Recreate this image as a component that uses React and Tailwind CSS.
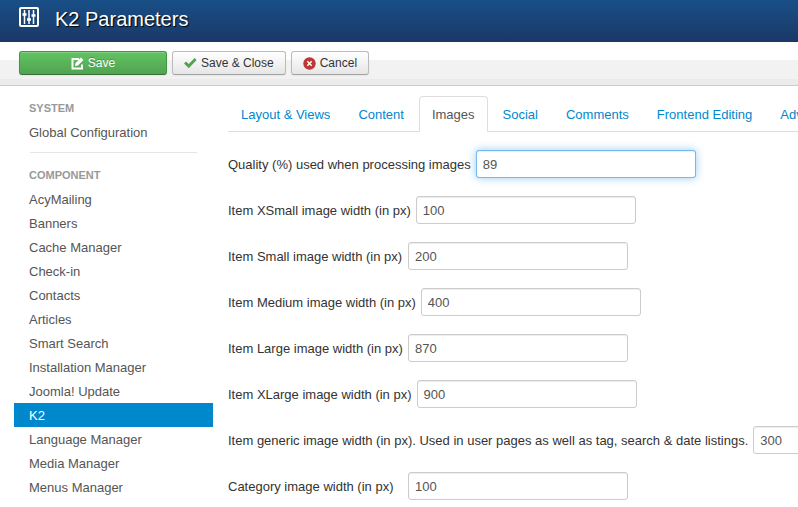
import { useState } from "react";

const COMPONENTS = [
  "AcyMailing",
  "Banners",
  "Cache Manager",
  "Check-in",
  "Contacts",
  "Articles",
  "Smart Search",
  "Installation Manager",
  "Joomla! Update",
  "K2",
  "Language Manager",
  "Media Manager",
  "Menus Manager",
  "Messaging",
];

const TABS = [
  "Layout & Views",
  "Content",
  "Images",
  "Social",
  "Comments",
  "Frontend Editing",
  "Advanced",
];

const FIELDS = [
  { id: "imagesQuality", label: "Quality (%) used when processing images", value: "89" },
  { id: "itemImageXS", label: "Item XSmall image width (in px)", value: "100" },
  { id: "itemImageS", label: "Item Small image width (in px)", value: "200" },
  { id: "itemImageM", label: "Item Medium image width (in px)", value: "400" },
  { id: "itemImageL", label: "Item Large image width (in px)", value: "870" },
  { id: "itemImageXL", label: "Item XLarge image width (in px)", value: "900" },
  {
    id: "itemImageGeneric",
    label:
      "Item generic image width (in px). Used in user pages as well as tag, search & date listings.",
    value: "300",
  },
  { id: "catImageWidth", label: "Category image width (in px)", value: "100" },
];

const BTN =
  "flex h-6 items-center justify-center gap-1 rounded-[3px] border text-[12px] shadow-[inset_0_1px_0_rgba(255,255,255,0.2),0_1px_2px_rgba(0,0,0,0.05)]";
const BTN_DEFAULT =
  "border-[#bbb] border-b-[#a2a2a2] bg-linear-to-b from-white to-[#e6e6e6] px-[11px] text-[#333]";

function EqualizerIcon() {
  return (
    <svg viewBox="0 0 20 20" className="h-5 w-5" fill="none" stroke="#fff" aria-hidden>
      <rect x="1" y="1" width="18" height="18" rx="1" strokeWidth="2" />
      <path d="M5.500 3v14M10 3v14M14.500 3v14" strokeWidth="1.500" />
      <path d="M3.500 7.500h4M8 12.500h4M12.500 8.500h4" strokeWidth="2.500" />
    </svg>
  );
}

function EditIcon() {
  return (
    <svg viewBox="0 0 13 13" className="h-[13px] w-[13px]" aria-hidden>
      <path d="M8 2H1.500v9.500H11V7.500" fill="none" stroke="#fff" strokeWidth="2" />
      <path d="M4 9l.6-3L10 .6l2.400 2.400L7 8.400z" fill="#fff" />
    </svg>
  );
}

function CheckIcon() {
  return (
    <svg viewBox="0 0 13 13" className="h-[13px] w-[13px]" aria-hidden>
      <path d="M0 6.500l2-2 2.800 2.400L10.600 1l2 2L4.800 11.200z" fill="#51a351" />
    </svg>
  );
}

function CancelIcon() {
  return (
    <svg viewBox="0 0 13 13" className="h-[13px] w-[13px]" aria-hidden>
      <circle cx="6.500" cy="6.500" r="6.200" fill="#bd362f" />
      <path d="M4.300 4.300l4.400 4.400M8.700 4.300L4.300 8.700" stroke="#fff" strokeWidth="1.500" />
    </svg>
  );
}

function Sidebar() {
  return (
    <nav className="w-[199px] shrink-0 pt-[10px] text-[#555]">
      <h2 className="px-[15px] text-[11px] leading-6 font-bold text-[#999] uppercase">System</h2>
      <a href="#global" className="block px-[15px] pt-0.5 leading-[22px]">
        Global Configuration
      </a>
      <hr className="mx-4 mt-2 mb-[10px] border-[#e5e5e5]" />
      <h2 className="px-[15px] text-[11px] leading-6 font-bold text-[#999] uppercase">Component</h2>
      <ul>
        {COMPONENTS.map((name) => (
          <li key={name}>
            <a
              href="#component"
              className={`block px-[15px] pt-0.5 leading-[22px] ${name === "K2" ? "bg-[#08c] text-white" : ""}`}
            >
              {name}
            </a>
          </li>
        ))}
      </ul>
    </nav>
  );
}

function Field({ id, label, value, focused }) {
  const [text, setText] = useState(value);
  return (
    <div className="flex items-center">
      <label htmlFor={id} className="min-w-[180px] shrink-0 pt-0.5 pr-[5px] whitespace-nowrap text-[#333]">
        {label}
      </label>
      <input
        id={id}
        type="text"
        value={text}
        autoFocus={focused}
        onChange={(e) => setText(e.target.value)}
        className="h-7 w-[220px] shrink-0 rounded-[3px] border border-[#ccc] bg-white px-1.5 text-[#555] shadow-[inset_0_1px_1px_rgba(0,0,0,0.075)] outline-none focus:border-[#52a8ec]/80 focus:shadow-[inset_0_1px_1px_rgba(0,0,0,0.075),0_0_8px_rgba(82,168,236,0.6)]"
      />
    </div>
  );
}

export default function App() {
  const [tab, setTab] = useState("Images");

  return (
    <div className="h-screen overflow-hidden bg-white font-['Liberation_Sans',Arial,sans-serif] text-[13px] leading-[18px]">
      <header className="flex h-[42px] items-start gap-4 bg-linear-to-b from-[#184f87] to-[#1a3867] px-[19px] pt-[7px] text-white">
        <EqualizerIcon />
        <h1 className="text-[20px] leading-6 [text-shadow:1px_1px_1px_#000]">K2 Parameters</h1>
      </header>

      <div className="flex h-11 items-start gap-[5px] border-b border-[#ccc] bg-[linear-gradient(#fff_18px,#f2f2f2_18px,#f2f2f2_37px,#ebebeb_37px)] px-[19px] pt-[9px]">
        <button
          className={`${BTN} w-[148px] border-[#409740] border-b-[#387038] bg-linear-to-b from-[#62c462] to-[#51a351] text-white [text-shadow:0_-1px_0_rgba(0,0,0,0.25)]`}
        >
          <EditIcon />
          Save
        </button>
        <button className={`${BTN} ${BTN_DEFAULT}`}>
          <CheckIcon />
          Save &amp; Close
        </button>
        <button className={`${BTN} ${BTN_DEFAULT}`}>
          <CancelIcon />
          Cancel
        </button>
      </div>

      <div className="flex gap-[15px] pl-[14px]">
        <Sidebar />
        <main className="min-w-0 flex-1 overflow-hidden pt-[10px]">
          <div role="tablist" className="flex gap-0.5 border-b border-[#ddd]">
            {TABS.map((t) => (
              <button
                key={t}
                role="tab"
                aria-selected={t === tab}
                onClick={() => setTab(t)}
                className={`-mb-px h-9 shrink-0 rounded-t border px-3 pt-0.5 whitespace-nowrap ${
                  t === tab
                    ? "border-[#ddd] border-b-white bg-white text-[#555]"
                    : "border-transparent text-[#08c]"
                }`}
              >
                {t}
              </button>
            ))}
          </div>
          <form className="flex flex-col gap-[18px] pt-[18px]">
            {FIELDS.map((f, i) => (
              <Field key={f.id} {...f} focused={i === 0} />
            ))}
          </form>
        </main>
      </div>
    </div>
  );
}
